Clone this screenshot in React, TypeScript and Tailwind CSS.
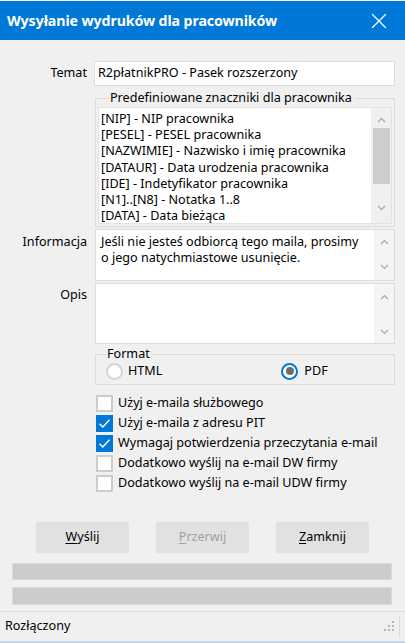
import { X } from "lucide-react";

function Chevron({ up }: { up?: boolean }) {
  return (
    <svg width="9" height="6" viewBox="0 0 9 6" className="text-[#a6a6a6]">
      <path
        d={up ? "M1 5 L4.5 1.5 L8 5" : "M1 1 L4.5 4.5 L8 1"}
        fill="none"
        stroke="currentColor"
        strokeWidth="1.2"
      />
    </svg>
  );
}

function TextBox({ h, lines, upTop, downTop }: { h: string; lines: string[]; upTop: string; downTop: string }) {
  return (
    <div className={`flex-1 ${h} bg-white border border-[#dcdcdc] flex`}>
      <div className="flex-1 pl-[5px] pt-[4px] leading-[16px]">
        {lines.map((l) => (
          <div key={l}>{l}</div>
        ))}
      </div>
      <div className="w-[20px] bg-[#f4f4f4] flex flex-col items-center">
        <div className={upTop}>
          <Chevron up />
        </div>
        <div className={downTop}>
          <Chevron />
        </div>
      </div>
    </div>
  );
}

function Check({ checked, label }: { checked?: boolean; label: string }) {
  return (
    <div className="flex items-center h-[17px]">
      {checked ? (
        <div className="w-[17px] h-[17px] bg-[#0078d7] flex items-center justify-center">
          <svg width="13" height="13" viewBox="0 0 13 13">
            <path d="M1.5 6.8 L4.8 10 L11.5 2.8" fill="none" stroke="white" strokeWidth="1.4" />
          </svg>
        </div>
      ) : (
        <div className="w-[17px] h-[17px] bg-white border-2 border-[#cccccc]" />
      )}
      <span className="ml-[5px]">{label}</span>
    </div>
  );
}

export default function App() {
  const tags = [
    "[NIP] - NIP pracownika",
    "[PESEL] - PESEL pracownika",
    "[NAZWIMIE] - Nazwisko i imię pracownika",
    "[DATAUR] - Data urodzenia pracownika",
    "[IDE] - Indetyfikator pracownika",
    "[N1]..[N8] - Notatka 1..8",
    "[DATA] - Data bieżąca",
  ];

  return (
    <div className="w-[405px] h-[643px] bg-[#f0f0f0] flex flex-col overflow-hidden text-[12.6px] text-black font-['Noto_Sans',sans-serif]">
      <div className="h-px bg-white" />
      <div className="h-[39px] bg-[#0078d7] flex items-center justify-between pl-[7px] pr-[13px] text-white">
        <span className="font-bold text-[14.2px] tracking-[-0.1px]">Wysyłanie wydruków dla pracowników</span>
        <X size={26} strokeWidth={1.15} />
      </div>

      <div className="flex flex-col pr-[10px]">
        {/* Temat */}
        <div className="flex items-center mt-[21px]">
          <div className="w-[87px] text-right">Temat</div>
          <div className="ml-[7px] flex-1 h-[25px] bg-white border border-[#dcdcdc] flex items-center pl-[3px]">
            R2płatnikPRO - Pasek rozszerzony
          </div>
        </div>

        {/* Predefiniowane znaczniki */}
        <div className="flex mt-[5px]">
          <div className="w-[95px]" />
          <fieldset className="flex-1 border border-[#dcdcdc] px-[2px] pb-[2px]">
            <legend className="ml-[10px] px-[2px] leading-[14px]">Predefiniowane znaczniki dla pracownika</legend>
            <div className="mt-[2px] h-[117px] bg-white border border-[#e3e3e3] flex">
              <div className="flex-1 pl-[2px] pt-[3px] leading-[16.2px]">
                {tags.map((t) => (
                  <div key={t}>{t}</div>
                ))}
              </div>
              <div className="w-[20px] bg-[#f0f0f0] flex flex-col items-center">
                <div className="mt-[9px]">
                  <Chevron up />
                </div>
                <div className="mt-[5px] w-[17px] h-[56px] bg-[#cdcdcd]" />
                <div className="mt-[21px]">
                  <Chevron />
                </div>
              </div>
            </div>
          </fieldset>
        </div>

        {/* Informacja */}
        <div className="flex mt-[2px]">
          <div className="w-[87px] text-right pt-[4px]">Informacja</div>
          <div className="ml-[8px] flex-1 flex">
            <TextBox
              h="h-[52px]"
              lines={["Jeśli nie jesteś odbiorcą tego maila, prosimy", "o jego natychmiastowe usunięcie."]}
              upTop="mt-[9px]"
              downTop="mt-[19px]"
            />
          </div>
        </div>

        {/* Opis */}
        <div className="flex mt-[2px]">
          <div className="w-[87px] text-right pt-[3px]">Opis</div>
          <div className="ml-[8px] flex-1 flex">
            <TextBox h="h-[61px]" lines={[]} upTop="mt-[10px]" downTop="mt-[29px]" />
          </div>
        </div>

        {/* Format */}
        <div className="flex mt-[3px]">
          <div className="w-[95px]" />
          <fieldset className="flex-1 border border-[#dcdcdc] pb-[5px]">
            <legend className="ml-[10px] px-[1px] leading-[14px]">Format</legend>
            <div className="mt-[2px] h-[16px] flex items-center">
              <div className="ml-[10px] w-[17px] h-[17px] rounded-full bg-white border-2 border-[#d4d4d4]" />
              <span className="ml-[5px]">HTML</span>
              <div className="ml-[119px] w-[17px] h-[17px] rounded-full bg-white border-2 border-[#0078d7] flex items-center justify-center">
                <div className="w-[8px] h-[8px] rounded-full bg-[#6d6d6d]" />
              </div>
              <span className="ml-[6px]">PDF</span>
            </div>
          </fieldset>
        </div>

        {/* Checkboxes */}
        <div className="flex flex-col gap-[3px] mt-[10px] ml-[96px]">
          <Check label="Użyj e-maila służbowego" />
          <Check checked label="Użyj e-maila z adresu PIT" />
          <Check checked label="Wymagaj potwierdzenia przeczytania e-mail" />
          <Check label="Dodatkowo wyślij na e-mail DW firmy" />
          <Check label="Dodatkowo wyślij na e-mail UDW firmy" />
        </div>

        {/* Buttons */}
        <div className="flex mt-[30px] ml-[36px] gap-[27px]">
          <button className="w-[93px] h-[31px] bg-[#e1e1e1]">
            <u className="underline-offset-2">W</u>yślij
          </button>
          <button className="w-[93px] h-[31px] bg-[#e1e1e1] text-[#a0a0a0]">
            <u className="underline-offset-2">P</u>rzerwij
          </button>
          <button className="w-[93px] h-[31px] bg-[#e1e1e1]">
            <u className="underline-offset-2">Z</u>amknij
          </button>
        </div>

        {/* Progress bars */}
        <div className="ml-[12px] mr-[3px] mt-[10px] h-[17px] bg-[#cccccc] border border-[#d9d9d9]" />
        <div className="ml-[12px] mr-[3px] mt-[7px] h-[18px] bg-[#cccccc] border border-[#d9d9d9]" />
      </div>

      {/* Status bar */}
      <div className="mt-[6px] flex-1 border-t border-[#dcdcdc] border-b-2 border-b-[#c7d6ea] flex items-center pl-[5px] pr-[5px]">
        <span className="flex-1">Rozłączony</span>
        <svg width="12" height="12" viewBox="0 0 12 12" className="mr-[3px]">
          <g fill="#b4b4b4">
            <rect x="8" y="0" width="2" height="2" />
            <rect x="4" y="4" width="2" height="2" />
            <rect x="8" y="4" width="2" height="2" />
            <rect x="0" y="8" width="2" height="2" />
            <rect x="4" y="8" width="2" height="2" />
            <rect x="8" y="8" width="2" height="2" />
          </g>
        </svg>
        <div className="w-px h-[22px] bg-[#dcdcdc]" />
      </div>
    </div>
  );
}
